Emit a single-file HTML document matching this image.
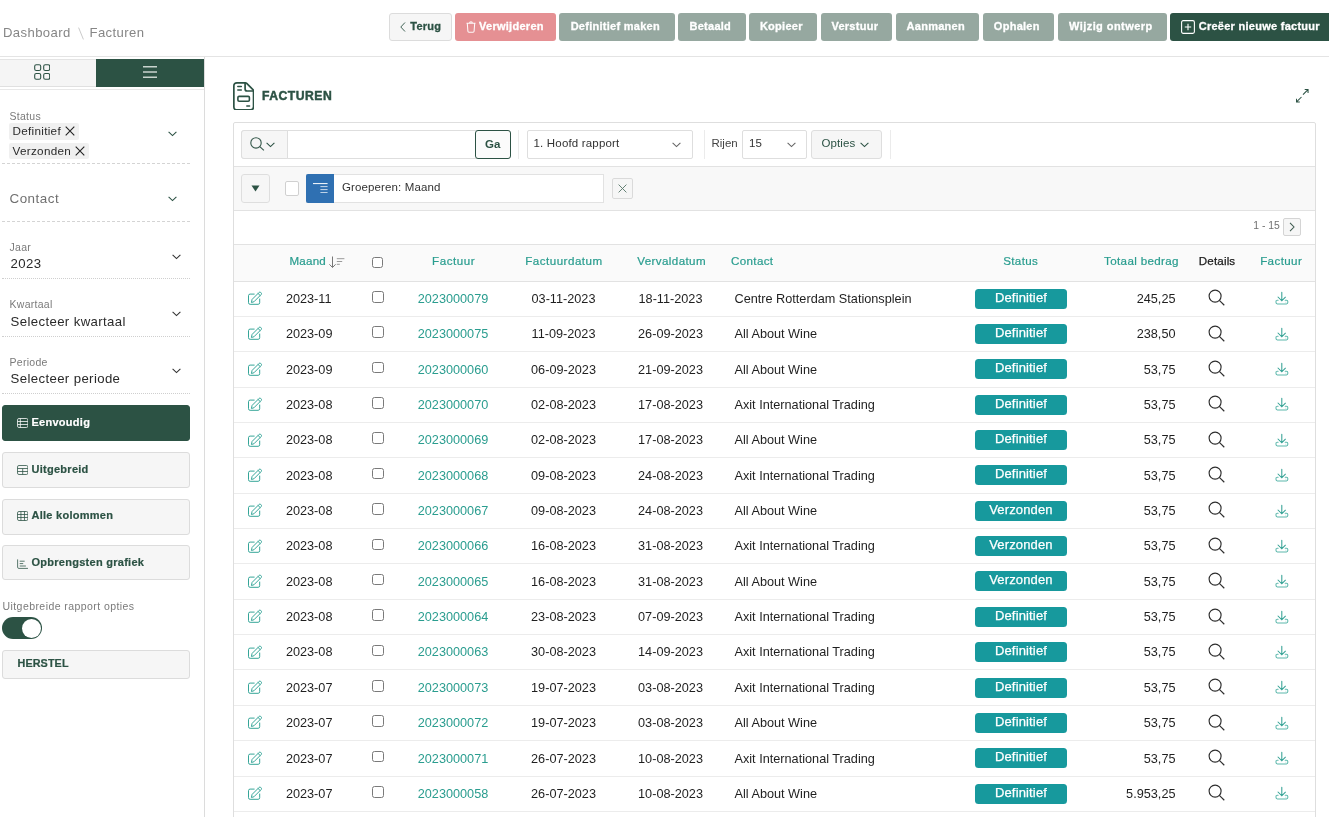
<!DOCTYPE html><html><head><meta charset="utf-8"><title>Facturen</title><style>
*{box-sizing:border-box;margin:0;padding:0}
html,body{width:1329px;height:817px;overflow:hidden;background:#fff}
body{font-family:"Liberation Sans",sans-serif;color:#222;position:relative;-webkit-font-smoothing:antialiased}
#root{position:absolute;left:0;top:0;width:1329px;height:817px;will-change:transform;transform:translateZ(0)}
.abs{position:absolute}
.topbar{position:absolute;left:0;top:0;width:1329px;height:57px;background:#fff;border-bottom:1px solid #e4e4e4}
.crumb{position:absolute;top:25.2px;font-size:13.1px;letter-spacing:0.4px;color:#868686;line-height:16px;white-space:nowrap}
.tb{position:absolute;top:13px;height:28px;border-radius:3px;color:#fff;font-weight:700;font-size:11px;letter-spacing:0.27px;line-height:27px;text-align:center;white-space:nowrap;background:#96a8a0;padding-right:3.4px;-webkit-text-stroke:0.3px currentColor}
.side{position:absolute;left:0;top:57px;width:205px;height:760px;border-right:1px solid #dcdcdc;background:#fff}
.lbl{position:absolute;left:9.5px;font-size:10.5px;letter-spacing:0.28px;color:#7a7a7a;line-height:13px;white-space:nowrap}
.val{position:absolute;left:10.5px;font-size:13.2px;letter-spacing:0.38px;color:#2a2a2a;line-height:16px;white-space:nowrap}
.dash{position:absolute;left:2px;width:188px;height:0;border-top:1px dashed #d4d4d4}
.dot{position:absolute;left:2px;width:188px;height:0;border-top:1px dotted #cfcfcf}
.chip{position:absolute;left:9px;height:16.4px;background:#f0f0f0;border-radius:2px;font-size:11.7px;letter-spacing:0.3px;line-height:16.4px;color:#2a2a2a;padding-left:3.5px;white-space:nowrap}
.sbtn{position:absolute;left:2px;width:188px;height:35px;border:1px solid #dcdcdc;border-radius:3px;background:#f6f6f6;color:#2c5244;font-weight:700;font-size:11px;letter-spacing:0.27px;line-height:33px;padding-left:28.5px;-webkit-text-stroke:0.2px currentColor;white-space:nowrap}
.sbtn.on{background:#2c5244;border-color:#2c5244;color:#fff}
.region{position:absolute;left:233px;top:122px;width:1083px;height:700px;border:1px solid #dedede;border-radius:2px;background:#fff}
.hdr{position:absolute;font-size:11.6px;color:#2a9d8f;line-height:14px;white-space:nowrap;text-align:center;-webkit-text-stroke:0.22px #2a9d8f}
.cell{position:absolute;font-size:12.7px;color:#1f1f1f;line-height:16px;white-space:nowrap}
.lnk{color:#2a9d8f}
.badge{position:absolute;left:975px;width:92px;height:20px;border-radius:3.5px;background:#17999d;color:#fff;font-size:13px;line-height:18.8px;text-align:center;letter-spacing:0.15px;-webkit-text-stroke:0.25px #fff}
.rowline{position:absolute;left:234px;width:1081px;height:1px;background:#ececec}
.cb{position:absolute;width:11.6px;height:11.6px;border:1px solid #7a7a7a;border-radius:2.5px;background:#fff}
</style></head><body><div id="root">
<div class="topbar">
<div class="crumb" style="left:3px">Dashboard</div>
<svg class="abs" style="left:78px;top:27px" width="6" height="13" viewBox="0 0 6 13"><path d="M0.6 0.6 L5.4 12.4" stroke="#c4c4c4" stroke-width="0.9"/></svg>
<div class="crumb" style="left:89.5px">Facturen</div>
<div class="tb" style="left:389px;width:63px;background:#f6f6f6;border:1px solid #dcdcdc;color:#2c5244;line-height:25px;padding-left:14.6px;padding-right:4px"><svg class="abs" style="left:8.6px;top:7px" width="8" height="12" viewBox="0 0 8 12"><path d="M6 1.5 L1.8 6 L6 10.5" fill="none" stroke="#2c5244" stroke-width="0.9"/></svg>Terug</div>
<div class="tb" style="left:455px;width:101px;background:#e59093;padding-left:11.8px;padding-right:0"><svg class="abs" style="left:10.9px;top:8.1px" width="10" height="11.8" viewBox="0 0 10 11.8"><path d="M0.5 2.3 H9.5 M3.6 2.2 Q3.6 0.7 5 0.7 Q6.4 0.7 6.4 2.2 M1.3 2.5 L1.9 10.3 Q2 11.2 2.9 11.2 H7.1 Q8 11.2 8.1 10.3 L8.7 2.5" fill="none" stroke="#fff" stroke-width="1.05" stroke-opacity="0.95"/></svg>Verwijderen</div>
<div class="tb" style="left:559px;width:116px">Definitief maken</div>
<div class="tb" style="left:678px;width:68px">Betaald</div>
<div class="tb" style="left:749px;width:68px">Kopieer</div>
<div class="tb" style="left:821px;width:71px">Verstuur</div>
<div class="tb" style="left:896px;width:83px">Aanmanen</div>
<div class="tb" style="left:983px;width:71px">Ophalen</div>
<div class="tb" style="left:1058px;width:109px"><span style="letter-spacing:0.44px">Wijzig ontwerp</span></div>
<div class="tb" style="left:1170px;width:162px;background:#2c5244;padding-left:16.6px;padding-right:0"><svg class="abs" style="left:11px;top:7px" width="14" height="14" viewBox="0 0 14 14"><rect x="0.6" y="0.6" width="12.8" height="12.8" rx="1.6" fill="none" stroke="#fff" stroke-width="1.1"/><path d="M7 3.8 V10.2 M3.8 7 H10.2" stroke="#fff" stroke-width="1.1"/></svg>Creëer nieuwe factuur</div>
</div>
<div class="side">
<div class="abs" style="left:0;top:1.5px;width:96px;height:28px;background:#f5f5f5;border-top:1px solid #e4e4e4;border-bottom:1px solid #e0e0e0"></div>
<div class="abs" style="left:96px;top:1.5px;width:108px;height:28px;background:#2c5244"></div>
<div class="abs" style="left:0;top:32px;width:204px;height:1px;background:#e8e8e8"></div>
<svg class="abs" style="left:33.7px;top:6.7px" width="16.4" height="16" viewBox="0 0 16.4 16" fill="none" stroke="#2c5244" stroke-width="1.1"><rect x="0.7" y="0.7" width="6" height="5.8" rx="1.6"/><rect x="9.7" y="0.7" width="6" height="5.8" rx="1.6"/><rect x="0.7" y="9.5" width="6" height="5.8" rx="1.6"/><rect x="9.7" y="9.5" width="6" height="5.8" rx="1.6"/></svg>
<svg class="abs" style="left:143px;top:9px" width="14" height="12" viewBox="0 0 14 12" stroke="#c9d4ce" stroke-width="1.5"><path d="M0 0.8 H14 M0 6 H14 M0 11.2 H14"/></svg>
<div class="lbl" style="top:52.599999999999994px">Status</div>
<div class="chip" style="top:66.3px;width:69.5px">Definitief<svg style="position:absolute;right:4px;top:3.2px" width="10" height="10" viewBox="0 0 10 10"><path d="M0.7 0.7 L9.3 9.3 M9.3 0.7 L0.7 9.3" stroke="#222" stroke-width="1.1"/></svg></div>
<div class="chip" style="top:85.80000000000001px;width:79.5px">Verzonden<svg style="position:absolute;right:4px;top:3.2px" width="10" height="10" viewBox="0 0 10 10"><path d="M0.7 0.7 L9.3 9.3 M9.3 0.7 L0.7 9.3" stroke="#222" stroke-width="1.1"/></svg></div>
<svg class="abs" style="left:167.5px;top:73.69999999999999px" width="9" height="6" viewBox="0 0 9 6"><path d="M0.6 0.8 L4.5 4.6 L8.4 0.8" fill="none" stroke="#2c5244" stroke-width="1.1"/></svg>
<div class="dash" style="top:106px"></div>
<div class="val" style="left:9.5px;top:133.5px;color:#707070;font-size:13.4px;letter-spacing:0.5px">Contact</div>
<svg class="abs" style="left:167.5px;top:138.7px" width="9" height="6" viewBox="0 0 9 6"><path d="M0.6 0.8 L4.5 4.6 L8.4 0.8" fill="none" stroke="#2c5244" stroke-width="1.1"/></svg>
<div class="dash" style="top:164px"></div>
<div class="lbl" style="top:184px">Jaar</div>
<div class="val" style="top:198.5px">2023</div>
<svg class="abs" style="left:171.5px;top:196.5px" width="9" height="6" viewBox="0 0 9 6"><path d="M0.6 0.8 L4.5 4.6 L8.4 0.8" fill="none" stroke="#333" stroke-width="1.1"/></svg>
<div class="dot" style="top:221px"></div>
<div class="lbl" style="top:241px">Kwartaal</div>
<div class="val" style="top:256.5px">Selecteer kwartaal</div>
<svg class="abs" style="left:171.5px;top:253.5px" width="9" height="6" viewBox="0 0 9 6"><path d="M0.6 0.8 L4.5 4.6 L8.4 0.8" fill="none" stroke="#333" stroke-width="1.1"/></svg>
<div class="dot" style="top:279px"></div>
<div class="lbl" style="top:299px">Periode</div>
<div class="val" style="top:313.5px">Selecteer periode</div>
<svg class="abs" style="left:171.5px;top:311.1px" width="9" height="6" viewBox="0 0 9 6"><path d="M0.6 0.8 L4.5 4.6 L8.4 0.8" fill="none" stroke="#333" stroke-width="1.1"/></svg>
<div class="dot" style="top:336px"></div>
<div class="sbtn on" style="top:348.00px;height:35.7px;line-height:32.80px"><span class="abs" style="left:13.5px;top:12.20px;line-height:0"><svg width="11.4" height="10" viewBox="0 0 11 10" preserveAspectRatio="none" fill="none" stroke="#fff" stroke-width="0.85" stroke-opacity="0.9"><rect x="0.5" y="0.5" width="10" height="9" rx="1.4"/><path d="M0.5 3.5 H10.5 M0.5 6.5 H10.5 M3.2 0.5 V9.5"/></svg></span>Eenvoudig</div>
<div class="sbtn" style="top:395.20px;height:35.4px;line-height:32.40px"><span class="abs" style="left:13.5px;top:12.00px;line-height:0"><svg width="11.4" height="10" viewBox="0 0 11 10" preserveAspectRatio="none" fill="none" stroke="#2c5244" stroke-width="0.85" stroke-opacity="0.9"><rect x="0.5" y="0.5" width="10" height="9" rx="1.4"/><path d="M0.5 3.5 H10.5 M0.5 6.5 H10.5 M5.5 3.5 V9.5"/></svg></span>Uitgebreid</div>
<div class="sbtn" style="top:442.40px;height:35.7px;line-height:30.40px"><span class="abs" style="left:13.5px;top:11.00px;line-height:0"><svg width="11.4" height="10" viewBox="0 0 11 10" preserveAspectRatio="none" fill="none" stroke="#2c5244" stroke-width="0.85" stroke-opacity="0.9"><rect x="0.5" y="0.5" width="10" height="9" rx="1.4"/><path d="M0.5 3.5 H10.5 M0.5 6.5 H10.5 M3.8 0.5 V9.5 M7.2 0.5 V9.5"/></svg></span>Alle kolommen</div>
<div class="sbtn" style="top:488.40px;height:35px;line-height:33.20px"><span class="abs" style="left:13.5px;top:12.40px;line-height:0"><svg width="11.4" height="10" viewBox="0 0 11 10" preserveAspectRatio="none" fill="none" stroke="#2c5244" stroke-width="0.85" stroke-opacity="0.9"><path d="M0.6 0.4 V8.2 Q0.6 9.4 1.8 9.4 H10.6 M2.6 2.2 H7.4 M2.6 4.6 H6 M2.6 7 H8.6"/></svg></span>Opbrengsten grafiek</div>
<div class="lbl" style="left:2.5px;top:543px;font-size:10.5px;letter-spacing:0.43px">Uitgebreide rapport opties</div>
<div class="abs" style="left:2px;top:560px;width:40px;height:22px;border-radius:11px;background:#2c5244"><div class="abs" style="right:1.5px;top:1.5px;width:19px;height:19px;border-radius:50%;background:#fff"></div></div>
<div class="sbtn" style="top:593px;height:28.5px;line-height:25.5px;padding-left:14.5px;font-size:10.8px;letter-spacing:0.1px">HERSTEL</div>
</div>
<svg class="abs" style="left:232.7px;top:81.7px" width="21.4" height="28.7" viewBox="0 0 21.4 28.7" fill="none" stroke="#2c5244" stroke-width="1.7" stroke-linecap="round" stroke-linejoin="round"><path d="M0.85 4 Q0.85 0.85 4 0.85 H12.3 Q13.1 0.85 13.7 1.45 L19.95 7.7 Q20.55 8.3 20.55 9.1 V24.7 Q20.55 27.85 17.4 27.85 H4 Q0.85 27.85 0.85 24.7 Z"/><path d="M12.1 1.2 V7 Q12.1 9 14.1 9 H20.2"/><path d="M4.8 4.5 H8.3 M4.8 8.1 H8.3" stroke-width="1.5"/><rect x="4.9" y="14.4" width="11.5" height="4.9" rx="1.2" stroke-width="1.6"/><path d="M13.8 24.1 H16.6" stroke-width="1.5"/></svg>
<div class="abs" style="left:262px;top:88.1px;font-size:12.2px;font-weight:700;color:#2c5244;line-height:16px;letter-spacing:0.48px;-webkit-text-stroke:0.45px #2c5244">FACTUREN</div>
<svg class="abs" style="left:1296.1px;top:89px" width="12.6" height="13.6" viewBox="0 0 12.6 13.6" fill="none" stroke="#2c5244" stroke-width="1.05"><path d="M7 5.6 L12 0.6 M8.7 0.55 H12.05 V3.9 M5.5 8 L0.5 13 M0.45 9.7 V13.05 H3.8"/></svg>
<div class="region"></div>
<div class="abs" style="left:241px;top:130px;width:270px;height:28.5px;border:1px solid #dedede;border-radius:3px;background:#fff"></div>
<div class="abs" style="left:241px;top:130px;width:47px;height:28.5px;border:1px solid #dedede;border-radius:3px 0 0 3px;background:#f6f6f6"></div>
<svg class="abs" style="left:250.2px;top:137.2px" width="15" height="14" viewBox="0 0 15 14" fill="none" stroke="#34574a" stroke-width="1.1"><circle cx="6" cy="5.9" r="5.2"/><path d="M9.8 9.7 L13.9 13.4"/></svg>
<svg class="abs" style="left:266.0px;top:142.0px" width="9" height="6" viewBox="0 0 9 6"><path d="M0.6 0.8 L4.5 4.6 L8.4 0.8" fill="none" stroke="#2c5244" stroke-width="1.1"/></svg>
<div class="abs" style="left:474.5px;top:130px;width:36.5px;height:28.5px;border:1px solid #2c5244;border-radius:3px;background:#fbfbfb;color:#2c5244;font-weight:700;font-size:11.5px;line-height:26px;text-align:center">Ga</div>
<div class="abs" style="left:518px;top:130px;width:1px;height:28.5px;background:#ebebeb"></div>
<div class="abs" style="left:527px;top:130px;width:165.5px;height:28.5px;border:1px solid #dedede;border-radius:2px;background:#fff;font-size:11.5px;line-height:24.6px;padding-left:5.5px;color:#333;letter-spacing:0.18px">1. Hoofd rapport</div>
<svg class="abs" style="left:672.0px;top:142.0px" width="9" height="6" viewBox="0 0 9 6"><path d="M0.6 0.8 L4.5 4.6 L8.4 0.8" fill="none" stroke="#666" stroke-width="1.1"/></svg>
<div class="abs" style="left:704px;top:130px;width:1px;height:28.5px;background:#ebebeb"></div>
<div class="abs" style="left:711.5px;top:130px;font-size:11.5px;line-height:27px;color:#444">Rijen</div>
<div class="abs" style="left:742px;top:130px;width:64.5px;height:28.5px;border:1px solid #dedede;border-radius:2px;background:#fff;font-size:11.5px;line-height:24.4px;padding-left:6px;color:#333">15</div>
<svg class="abs" style="left:786.5px;top:142.0px" width="9" height="6" viewBox="0 0 9 6"><path d="M0.6 0.8 L4.5 4.6 L8.4 0.8" fill="none" stroke="#666" stroke-width="1.1"/></svg>
<div class="abs" style="left:811px;top:130px;width:70.5px;height:28.5px;border:1px solid #dedede;border-radius:3px;background:#f6f6f6;font-size:11.5px;line-height:24.4px;padding-left:9.5px;letter-spacing:0.1px;color:#2c5244">Opties</div>
<svg class="abs" style="left:859.5px;top:141.8px" width="9" height="6" viewBox="0 0 9 6"><path d="M0.6 0.8 L4.5 4.6 L8.4 0.8" fill="none" stroke="#2c5244" stroke-width="1.1"/></svg>
<div class="abs" style="left:889.5px;top:130px;width:1px;height:28.5px;background:#ebebeb"></div>
<div class="abs" style="left:234px;top:166px;width:1081px;height:44.5px;background:#f8f8f8;border-top:1px solid #e2e2e2;border-bottom:1px solid #e2e2e2"></div>
<div class="abs" style="left:241px;top:174px;width:28.5px;height:28.6px;border:1px solid #dedede;border-radius:3px;background:#f6f6f6"></div>
<svg class="abs" style="left:251px;top:185px" width="9" height="7" viewBox="0 0 9 7"><path d="M0.5 0.5 H8.5 L4.5 6.5 Z" fill="#2c5244"/></svg>
<div class="abs" style="left:284.5px;top:181px;width:14.5px;height:14.5px;border:1px solid #d0d0d0;border-radius:2px;background:#fff"></div>
<div class="abs" style="left:306px;top:174px;width:297.5px;height:28.6px;border:1px solid #e2e2e2;background:#fff;font-size:11.5px;line-height:24.4px;padding-left:35px;color:#333;letter-spacing:0.12px">Groeperen: Maand</div>
<div class="abs" style="left:306px;top:174px;width:28px;height:28.6px;background:#2f70b2;border-radius:2px 0 0 2px"></div>
<svg class="abs" style="left:313.2px;top:182.7px" width="14.6" height="10.4" viewBox="0 0 14.6 10.4" stroke="#fff" stroke-width="1"><path d="M0 0.6 H14.6"/><path d="M7.4 3.6 H14.6 M7.4 6.6 H14.6 M7.4 9.6 H14.6" stroke-opacity="0.75"/></svg>
<div class="abs" style="left:612px;top:178px;width:20.6px;height:20.6px;border:1px solid #dadada;border-radius:2px;background:#f6f6f6"></div>
<svg class="abs" style="left:618px;top:184px" width="9" height="9" viewBox="0 0 9 9"><path d="M0.6 0.6 L8.4 8.4 M8.4 0.6 L0.6 8.4" stroke="#5d7b6f" stroke-width="0.95"/></svg>
<div class="abs" style="left:1253.3px;top:218.7px;font-size:10.4px;line-height:14px;color:#707070">1 - 15</div>
<div class="abs" style="left:1283px;top:218px;width:18px;height:17.5px;border:1px solid #d4d4d4;border-radius:2px;background:#f6f6f6"></div>
<svg class="abs" style="left:1289px;top:222px" width="6" height="10" viewBox="0 0 6 10"><path d="M1 0.8 L5 5 L1 9.2" fill="none" stroke="#3d5a4f" stroke-width="1.05"/></svg>
<div class="abs" style="left:234px;top:244px;width:1081px;height:37.5px;background:#fafafa;border-top:1px solid #e2e2e2;border-bottom:1px solid #e2e2e2"></div>
<div class="hdr" style="left:289.5px;top:254.3px;letter-spacing:0.2px">Maand</div>
<svg class="abs" style="left:329px;top:256px" width="16" height="12" viewBox="0 0 16 12" fill="none" stroke="#777" stroke-width="1"><path d="M3.5 0.5 V11.3 M0.4 8.3 L3.5 11.5 L6.6 8.3"/><path d="M7.8 2.7 H15.4 M7.8 5.5 H13.2 M7.8 8.3 H10.8" stroke="#9a9a9a"/></svg>
<div class="cb" style="left:372px;top:256.9px;width:11px;height:11px"></div>
<div class="hdr" style="left:393.67499999999995px;width:120px;top:254.3px;letter-spacing:0.55px;">Factuur</div>
<div class="hdr" style="left:503.95000000000005px;width:120px;top:254.3px;letter-spacing:0.5px;">Factuurdatum</div>
<div class="hdr" style="left:611.6px;width:120px;top:254.3px;letter-spacing:0.4px;">Vervaldatum</div>
<div class="hdr" style="left:731px;top:254.3px;letter-spacing:0.35px">Contact</div>
<div class="hdr" style="left:960.675px;width:120px;top:254.3px;letter-spacing:0.35px;">Status</div>
<div class="hdr" style="left:1058.9px;width:120px;text-align:right;top:254.3px;letter-spacing:0.35px">Totaal bedrag</div>
<div class="hdr" style="left:1157.075px;width:120px;top:254.3px;letter-spacing:0.15px;color:#1a1a1a;-webkit-text-stroke:0.25px #1a1a1a">Details</div>
<div class="hdr" style="left:1221.2px;width:120px;top:254.3px;letter-spacing:0.4px;">Factuur</div>
<svg class="abs" style="left:247.7px;top:291.1px" width="14.5" height="14" viewBox="0 0 14.5 14" fill="none" stroke="#35a598" stroke-width="1" stroke-linejoin="round" stroke-linecap="round"><path d="M6.2 3.1 H2.1 Q0.5 3.1 0.5 4.7 V11.7 Q0.5 13.3 2.1 13.3 H10.1 Q11.7 13.3 11.7 11.7 V8"/><path d="M3.5 11.1 L4.1 8.4 L11.1 1.4 Q11.9 0.6 12.7 1.4 L13.2 1.9 Q14 2.7 13.2 3.5 L6.2 10.5 Z"/><path d="M10.1 2.5 L12.1 4.5"/></svg>
<div class="cell" style="left:285.9px;top:290.85px">2023-11</div>
<div class="cb" style="left:372px;top:291.00px"></div>
<div class="cell lnk" style="left:393px;width:120px;text-align:center;top:290.85px">2023000079</div>
<div class="cell" style="left:503.5px;width:120px;text-align:center;top:290.85px">03-11-2023</div>
<div class="cell" style="left:610.5px;width:120px;text-align:center;top:290.85px">18-11-2023</div>
<div class="cell" style="left:734.5px;top:290.85px">Centre Rotterdam Stationsplein</div>
<div class="badge" style="top:288.60px">Definitief</div>
<div class="cell" style="left:1055.5px;width:120px;text-align:right;top:290.85px">245,25</div>
<svg class="abs" style="left:1208.4px;top:289.3px" width="17" height="17" viewBox="0 0 17 17" fill="none" stroke="#2e2e2e" stroke-width="1.15"><circle cx="7.1" cy="7.05" r="6"/><path d="M11.35 11.3 L16.3 16.25"/></svg>
<svg class="abs" style="left:1274.6px;top:291.4px" width="14" height="14" viewBox="0 0 14 14" fill="none" stroke="#33a194" stroke-width="1.05" stroke-linecap="round"><path d="M6.8 1.2 V9.6 M3 6 L6.8 9.8 L10.4 6.2"/><path d="M3.1 9.2 H2.2 Q1 9.2 1 10.4 V11.6 Q1 12.9 2.3 12.9 H11.5 Q12.8 12.9 12.8 11.6 V10.4 Q12.8 9.2 11.6 9.2 H10.2" stroke="#5db8ac"/><circle cx="10.9" cy="11.1" r="0.45" fill="#5db8ac" stroke="none"/></svg>
<div class="rowline" style="top:315.86px"></div>
<svg class="abs" style="left:247.7px;top:326.46px" width="14.5" height="14" viewBox="0 0 14.5 14" fill="none" stroke="#35a598" stroke-width="1" stroke-linejoin="round" stroke-linecap="round"><path d="M6.2 3.1 H2.1 Q0.5 3.1 0.5 4.7 V11.7 Q0.5 13.3 2.1 13.3 H10.1 Q11.7 13.3 11.7 11.7 V8"/><path d="M3.5 11.1 L4.1 8.4 L11.1 1.4 Q11.9 0.6 12.7 1.4 L13.2 1.9 Q14 2.7 13.2 3.5 L6.2 10.5 Z"/><path d="M10.1 2.5 L12.1 4.5"/></svg>
<div class="cell" style="left:285.9px;top:326.21px">2023-09</div>
<div class="cb" style="left:372px;top:326.36px"></div>
<div class="cell lnk" style="left:393px;width:120px;text-align:center;top:326.21px">2023000075</div>
<div class="cell" style="left:503.5px;width:120px;text-align:center;top:326.21px">11-09-2023</div>
<div class="cell" style="left:610.5px;width:120px;text-align:center;top:326.21px">26-09-2023</div>
<div class="cell" style="left:734.5px;top:326.21px">All About Wine</div>
<div class="badge" style="top:323.96px">Definitief</div>
<div class="cell" style="left:1055.5px;width:120px;text-align:right;top:326.21px">238,50</div>
<svg class="abs" style="left:1208.4px;top:324.66px" width="17" height="17" viewBox="0 0 17 17" fill="none" stroke="#2e2e2e" stroke-width="1.15"><circle cx="7.1" cy="7.05" r="6"/><path d="M11.35 11.3 L16.3 16.25"/></svg>
<svg class="abs" style="left:1274.6px;top:326.76px" width="14" height="14" viewBox="0 0 14 14" fill="none" stroke="#33a194" stroke-width="1.05" stroke-linecap="round"><path d="M6.8 1.2 V9.6 M3 6 L6.8 9.8 L10.4 6.2"/><path d="M3.1 9.2 H2.2 Q1 9.2 1 10.4 V11.6 Q1 12.9 2.3 12.9 H11.5 Q12.8 12.9 12.8 11.6 V10.4 Q12.8 9.2 11.6 9.2 H10.2" stroke="#5db8ac"/><circle cx="10.9" cy="11.1" r="0.45" fill="#5db8ac" stroke="none"/></svg>
<div class="rowline" style="top:351.22px"></div>
<svg class="abs" style="left:247.7px;top:361.82px" width="14.5" height="14" viewBox="0 0 14.5 14" fill="none" stroke="#35a598" stroke-width="1" stroke-linejoin="round" stroke-linecap="round"><path d="M6.2 3.1 H2.1 Q0.5 3.1 0.5 4.7 V11.7 Q0.5 13.3 2.1 13.3 H10.1 Q11.7 13.3 11.7 11.7 V8"/><path d="M3.5 11.1 L4.1 8.4 L11.1 1.4 Q11.9 0.6 12.7 1.4 L13.2 1.9 Q14 2.7 13.2 3.5 L6.2 10.5 Z"/><path d="M10.1 2.5 L12.1 4.5"/></svg>
<div class="cell" style="left:285.9px;top:361.57px">2023-09</div>
<div class="cb" style="left:372px;top:361.72px"></div>
<div class="cell lnk" style="left:393px;width:120px;text-align:center;top:361.57px">2023000060</div>
<div class="cell" style="left:503.5px;width:120px;text-align:center;top:361.57px">06-09-2023</div>
<div class="cell" style="left:610.5px;width:120px;text-align:center;top:361.57px">21-09-2023</div>
<div class="cell" style="left:734.5px;top:361.57px">All About Wine</div>
<div class="badge" style="top:359.32px">Definitief</div>
<div class="cell" style="left:1055.5px;width:120px;text-align:right;top:361.57px">53,75</div>
<svg class="abs" style="left:1208.4px;top:360.02px" width="17" height="17" viewBox="0 0 17 17" fill="none" stroke="#2e2e2e" stroke-width="1.15"><circle cx="7.1" cy="7.05" r="6"/><path d="M11.35 11.3 L16.3 16.25"/></svg>
<svg class="abs" style="left:1274.6px;top:362.12px" width="14" height="14" viewBox="0 0 14 14" fill="none" stroke="#33a194" stroke-width="1.05" stroke-linecap="round"><path d="M6.8 1.2 V9.6 M3 6 L6.8 9.8 L10.4 6.2"/><path d="M3.1 9.2 H2.2 Q1 9.2 1 10.4 V11.6 Q1 12.9 2.3 12.9 H11.5 Q12.8 12.9 12.8 11.6 V10.4 Q12.8 9.2 11.6 9.2 H10.2" stroke="#5db8ac"/><circle cx="10.9" cy="11.1" r="0.45" fill="#5db8ac" stroke="none"/></svg>
<div class="rowline" style="top:386.58px"></div>
<svg class="abs" style="left:247.7px;top:397.18px" width="14.5" height="14" viewBox="0 0 14.5 14" fill="none" stroke="#35a598" stroke-width="1" stroke-linejoin="round" stroke-linecap="round"><path d="M6.2 3.1 H2.1 Q0.5 3.1 0.5 4.7 V11.7 Q0.5 13.3 2.1 13.3 H10.1 Q11.7 13.3 11.7 11.7 V8"/><path d="M3.5 11.1 L4.1 8.4 L11.1 1.4 Q11.9 0.6 12.7 1.4 L13.2 1.9 Q14 2.7 13.2 3.5 L6.2 10.5 Z"/><path d="M10.1 2.5 L12.1 4.5"/></svg>
<div class="cell" style="left:285.9px;top:396.93px">2023-08</div>
<div class="cb" style="left:372px;top:397.08px"></div>
<div class="cell lnk" style="left:393px;width:120px;text-align:center;top:396.93px">2023000070</div>
<div class="cell" style="left:503.5px;width:120px;text-align:center;top:396.93px">02-08-2023</div>
<div class="cell" style="left:610.5px;width:120px;text-align:center;top:396.93px">17-08-2023</div>
<div class="cell" style="left:734.5px;top:396.93px">Axit International Trading</div>
<div class="badge" style="top:394.68px">Definitief</div>
<div class="cell" style="left:1055.5px;width:120px;text-align:right;top:396.93px">53,75</div>
<svg class="abs" style="left:1208.4px;top:395.38px" width="17" height="17" viewBox="0 0 17 17" fill="none" stroke="#2e2e2e" stroke-width="1.15"><circle cx="7.1" cy="7.05" r="6"/><path d="M11.35 11.3 L16.3 16.25"/></svg>
<svg class="abs" style="left:1274.6px;top:397.48px" width="14" height="14" viewBox="0 0 14 14" fill="none" stroke="#33a194" stroke-width="1.05" stroke-linecap="round"><path d="M6.8 1.2 V9.6 M3 6 L6.8 9.8 L10.4 6.2"/><path d="M3.1 9.2 H2.2 Q1 9.2 1 10.4 V11.6 Q1 12.9 2.3 12.9 H11.5 Q12.8 12.9 12.8 11.6 V10.4 Q12.8 9.2 11.6 9.2 H10.2" stroke="#5db8ac"/><circle cx="10.9" cy="11.1" r="0.45" fill="#5db8ac" stroke="none"/></svg>
<div class="rowline" style="top:421.94px"></div>
<svg class="abs" style="left:247.7px;top:432.54px" width="14.5" height="14" viewBox="0 0 14.5 14" fill="none" stroke="#35a598" stroke-width="1" stroke-linejoin="round" stroke-linecap="round"><path d="M6.2 3.1 H2.1 Q0.5 3.1 0.5 4.7 V11.7 Q0.5 13.3 2.1 13.3 H10.1 Q11.7 13.3 11.7 11.7 V8"/><path d="M3.5 11.1 L4.1 8.4 L11.1 1.4 Q11.9 0.6 12.7 1.4 L13.2 1.9 Q14 2.7 13.2 3.5 L6.2 10.5 Z"/><path d="M10.1 2.5 L12.1 4.5"/></svg>
<div class="cell" style="left:285.9px;top:432.29px">2023-08</div>
<div class="cb" style="left:372px;top:432.44px"></div>
<div class="cell lnk" style="left:393px;width:120px;text-align:center;top:432.29px">2023000069</div>
<div class="cell" style="left:503.5px;width:120px;text-align:center;top:432.29px">02-08-2023</div>
<div class="cell" style="left:610.5px;width:120px;text-align:center;top:432.29px">17-08-2023</div>
<div class="cell" style="left:734.5px;top:432.29px">All About Wine</div>
<div class="badge" style="top:430.04px">Definitief</div>
<div class="cell" style="left:1055.5px;width:120px;text-align:right;top:432.29px">53,75</div>
<svg class="abs" style="left:1208.4px;top:430.74px" width="17" height="17" viewBox="0 0 17 17" fill="none" stroke="#2e2e2e" stroke-width="1.15"><circle cx="7.1" cy="7.05" r="6"/><path d="M11.35 11.3 L16.3 16.25"/></svg>
<svg class="abs" style="left:1274.6px;top:432.84px" width="14" height="14" viewBox="0 0 14 14" fill="none" stroke="#33a194" stroke-width="1.05" stroke-linecap="round"><path d="M6.8 1.2 V9.6 M3 6 L6.8 9.8 L10.4 6.2"/><path d="M3.1 9.2 H2.2 Q1 9.2 1 10.4 V11.6 Q1 12.9 2.3 12.9 H11.5 Q12.8 12.9 12.8 11.6 V10.4 Q12.8 9.2 11.6 9.2 H10.2" stroke="#5db8ac"/><circle cx="10.9" cy="11.1" r="0.45" fill="#5db8ac" stroke="none"/></svg>
<div class="rowline" style="top:457.30px"></div>
<svg class="abs" style="left:247.7px;top:467.9px" width="14.5" height="14" viewBox="0 0 14.5 14" fill="none" stroke="#35a598" stroke-width="1" stroke-linejoin="round" stroke-linecap="round"><path d="M6.2 3.1 H2.1 Q0.5 3.1 0.5 4.7 V11.7 Q0.5 13.3 2.1 13.3 H10.1 Q11.7 13.3 11.7 11.7 V8"/><path d="M3.5 11.1 L4.1 8.4 L11.1 1.4 Q11.9 0.6 12.7 1.4 L13.2 1.9 Q14 2.7 13.2 3.5 L6.2 10.5 Z"/><path d="M10.1 2.5 L12.1 4.5"/></svg>
<div class="cell" style="left:285.9px;top:467.65px">2023-08</div>
<div class="cb" style="left:372px;top:467.80px"></div>
<div class="cell lnk" style="left:393px;width:120px;text-align:center;top:467.65px">2023000068</div>
<div class="cell" style="left:503.5px;width:120px;text-align:center;top:467.65px">09-08-2023</div>
<div class="cell" style="left:610.5px;width:120px;text-align:center;top:467.65px">24-08-2023</div>
<div class="cell" style="left:734.5px;top:467.65px">Axit International Trading</div>
<div class="badge" style="top:465.40px">Definitief</div>
<div class="cell" style="left:1055.5px;width:120px;text-align:right;top:467.65px">53,75</div>
<svg class="abs" style="left:1208.4px;top:466.1px" width="17" height="17" viewBox="0 0 17 17" fill="none" stroke="#2e2e2e" stroke-width="1.15"><circle cx="7.1" cy="7.05" r="6"/><path d="M11.35 11.3 L16.3 16.25"/></svg>
<svg class="abs" style="left:1274.6px;top:468.2px" width="14" height="14" viewBox="0 0 14 14" fill="none" stroke="#33a194" stroke-width="1.05" stroke-linecap="round"><path d="M6.8 1.2 V9.6 M3 6 L6.8 9.8 L10.4 6.2"/><path d="M3.1 9.2 H2.2 Q1 9.2 1 10.4 V11.6 Q1 12.9 2.3 12.9 H11.5 Q12.8 12.9 12.8 11.6 V10.4 Q12.8 9.2 11.6 9.2 H10.2" stroke="#5db8ac"/><circle cx="10.9" cy="11.1" r="0.45" fill="#5db8ac" stroke="none"/></svg>
<div class="rowline" style="top:492.66px"></div>
<svg class="abs" style="left:247.7px;top:503.26px" width="14.5" height="14" viewBox="0 0 14.5 14" fill="none" stroke="#35a598" stroke-width="1" stroke-linejoin="round" stroke-linecap="round"><path d="M6.2 3.1 H2.1 Q0.5 3.1 0.5 4.7 V11.7 Q0.5 13.3 2.1 13.3 H10.1 Q11.7 13.3 11.7 11.7 V8"/><path d="M3.5 11.1 L4.1 8.4 L11.1 1.4 Q11.9 0.6 12.7 1.4 L13.2 1.9 Q14 2.7 13.2 3.5 L6.2 10.5 Z"/><path d="M10.1 2.5 L12.1 4.5"/></svg>
<div class="cell" style="left:285.9px;top:503.01px">2023-08</div>
<div class="cb" style="left:372px;top:503.16px"></div>
<div class="cell lnk" style="left:393px;width:120px;text-align:center;top:503.01px">2023000067</div>
<div class="cell" style="left:503.5px;width:120px;text-align:center;top:503.01px">09-08-2023</div>
<div class="cell" style="left:610.5px;width:120px;text-align:center;top:503.01px">24-08-2023</div>
<div class="cell" style="left:734.5px;top:503.01px">All About Wine</div>
<div class="badge" style="top:500.76px">Verzonden</div>
<div class="cell" style="left:1055.5px;width:120px;text-align:right;top:503.01px">53,75</div>
<svg class="abs" style="left:1208.4px;top:501.46px" width="17" height="17" viewBox="0 0 17 17" fill="none" stroke="#2e2e2e" stroke-width="1.15"><circle cx="7.1" cy="7.05" r="6"/><path d="M11.35 11.3 L16.3 16.25"/></svg>
<svg class="abs" style="left:1274.6px;top:503.56px" width="14" height="14" viewBox="0 0 14 14" fill="none" stroke="#33a194" stroke-width="1.05" stroke-linecap="round"><path d="M6.8 1.2 V9.6 M3 6 L6.8 9.8 L10.4 6.2"/><path d="M3.1 9.2 H2.2 Q1 9.2 1 10.4 V11.6 Q1 12.9 2.3 12.9 H11.5 Q12.8 12.9 12.8 11.6 V10.4 Q12.8 9.2 11.6 9.2 H10.2" stroke="#5db8ac"/><circle cx="10.9" cy="11.1" r="0.45" fill="#5db8ac" stroke="none"/></svg>
<div class="rowline" style="top:528.02px"></div>
<svg class="abs" style="left:247.7px;top:538.62px" width="14.5" height="14" viewBox="0 0 14.5 14" fill="none" stroke="#35a598" stroke-width="1" stroke-linejoin="round" stroke-linecap="round"><path d="M6.2 3.1 H2.1 Q0.5 3.1 0.5 4.7 V11.7 Q0.5 13.3 2.1 13.3 H10.1 Q11.7 13.3 11.7 11.7 V8"/><path d="M3.5 11.1 L4.1 8.4 L11.1 1.4 Q11.9 0.6 12.7 1.4 L13.2 1.9 Q14 2.7 13.2 3.5 L6.2 10.5 Z"/><path d="M10.1 2.5 L12.1 4.5"/></svg>
<div class="cell" style="left:285.9px;top:538.37px">2023-08</div>
<div class="cb" style="left:372px;top:538.52px"></div>
<div class="cell lnk" style="left:393px;width:120px;text-align:center;top:538.37px">2023000066</div>
<div class="cell" style="left:503.5px;width:120px;text-align:center;top:538.37px">16-08-2023</div>
<div class="cell" style="left:610.5px;width:120px;text-align:center;top:538.37px">31-08-2023</div>
<div class="cell" style="left:734.5px;top:538.37px">Axit International Trading</div>
<div class="badge" style="top:536.12px">Verzonden</div>
<div class="cell" style="left:1055.5px;width:120px;text-align:right;top:538.37px">53,75</div>
<svg class="abs" style="left:1208.4px;top:536.82px" width="17" height="17" viewBox="0 0 17 17" fill="none" stroke="#2e2e2e" stroke-width="1.15"><circle cx="7.1" cy="7.05" r="6"/><path d="M11.35 11.3 L16.3 16.25"/></svg>
<svg class="abs" style="left:1274.6px;top:538.92px" width="14" height="14" viewBox="0 0 14 14" fill="none" stroke="#33a194" stroke-width="1.05" stroke-linecap="round"><path d="M6.8 1.2 V9.6 M3 6 L6.8 9.8 L10.4 6.2"/><path d="M3.1 9.2 H2.2 Q1 9.2 1 10.4 V11.6 Q1 12.9 2.3 12.9 H11.5 Q12.8 12.9 12.8 11.6 V10.4 Q12.8 9.2 11.6 9.2 H10.2" stroke="#5db8ac"/><circle cx="10.9" cy="11.1" r="0.45" fill="#5db8ac" stroke="none"/></svg>
<div class="rowline" style="top:563.38px"></div>
<svg class="abs" style="left:247.7px;top:573.98px" width="14.5" height="14" viewBox="0 0 14.5 14" fill="none" stroke="#35a598" stroke-width="1" stroke-linejoin="round" stroke-linecap="round"><path d="M6.2 3.1 H2.1 Q0.5 3.1 0.5 4.7 V11.7 Q0.5 13.3 2.1 13.3 H10.1 Q11.7 13.3 11.7 11.7 V8"/><path d="M3.5 11.1 L4.1 8.4 L11.1 1.4 Q11.9 0.6 12.7 1.4 L13.2 1.9 Q14 2.7 13.2 3.5 L6.2 10.5 Z"/><path d="M10.1 2.5 L12.1 4.5"/></svg>
<div class="cell" style="left:285.9px;top:573.73px">2023-08</div>
<div class="cb" style="left:372px;top:573.88px"></div>
<div class="cell lnk" style="left:393px;width:120px;text-align:center;top:573.73px">2023000065</div>
<div class="cell" style="left:503.5px;width:120px;text-align:center;top:573.73px">16-08-2023</div>
<div class="cell" style="left:610.5px;width:120px;text-align:center;top:573.73px">31-08-2023</div>
<div class="cell" style="left:734.5px;top:573.73px">All About Wine</div>
<div class="badge" style="top:571.48px">Verzonden</div>
<div class="cell" style="left:1055.5px;width:120px;text-align:right;top:573.73px">53,75</div>
<svg class="abs" style="left:1208.4px;top:572.18px" width="17" height="17" viewBox="0 0 17 17" fill="none" stroke="#2e2e2e" stroke-width="1.15"><circle cx="7.1" cy="7.05" r="6"/><path d="M11.35 11.3 L16.3 16.25"/></svg>
<svg class="abs" style="left:1274.6px;top:574.28px" width="14" height="14" viewBox="0 0 14 14" fill="none" stroke="#33a194" stroke-width="1.05" stroke-linecap="round"><path d="M6.8 1.2 V9.6 M3 6 L6.8 9.8 L10.4 6.2"/><path d="M3.1 9.2 H2.2 Q1 9.2 1 10.4 V11.6 Q1 12.9 2.3 12.9 H11.5 Q12.8 12.9 12.8 11.6 V10.4 Q12.8 9.2 11.6 9.2 H10.2" stroke="#5db8ac"/><circle cx="10.9" cy="11.1" r="0.45" fill="#5db8ac" stroke="none"/></svg>
<div class="rowline" style="top:598.74px"></div>
<svg class="abs" style="left:247.7px;top:609.34px" width="14.5" height="14" viewBox="0 0 14.5 14" fill="none" stroke="#35a598" stroke-width="1" stroke-linejoin="round" stroke-linecap="round"><path d="M6.2 3.1 H2.1 Q0.5 3.1 0.5 4.7 V11.7 Q0.5 13.3 2.1 13.3 H10.1 Q11.7 13.3 11.7 11.7 V8"/><path d="M3.5 11.1 L4.1 8.4 L11.1 1.4 Q11.9 0.6 12.7 1.4 L13.2 1.9 Q14 2.7 13.2 3.5 L6.2 10.5 Z"/><path d="M10.1 2.5 L12.1 4.5"/></svg>
<div class="cell" style="left:285.9px;top:609.09px">2023-08</div>
<div class="cb" style="left:372px;top:609.24px"></div>
<div class="cell lnk" style="left:393px;width:120px;text-align:center;top:609.09px">2023000064</div>
<div class="cell" style="left:503.5px;width:120px;text-align:center;top:609.09px">23-08-2023</div>
<div class="cell" style="left:610.5px;width:120px;text-align:center;top:609.09px">07-09-2023</div>
<div class="cell" style="left:734.5px;top:609.09px">Axit International Trading</div>
<div class="badge" style="top:606.84px">Definitief</div>
<div class="cell" style="left:1055.5px;width:120px;text-align:right;top:609.09px">53,75</div>
<svg class="abs" style="left:1208.4px;top:607.54px" width="17" height="17" viewBox="0 0 17 17" fill="none" stroke="#2e2e2e" stroke-width="1.15"><circle cx="7.1" cy="7.05" r="6"/><path d="M11.35 11.3 L16.3 16.25"/></svg>
<svg class="abs" style="left:1274.6px;top:609.64px" width="14" height="14" viewBox="0 0 14 14" fill="none" stroke="#33a194" stroke-width="1.05" stroke-linecap="round"><path d="M6.8 1.2 V9.6 M3 6 L6.8 9.8 L10.4 6.2"/><path d="M3.1 9.2 H2.2 Q1 9.2 1 10.4 V11.6 Q1 12.9 2.3 12.9 H11.5 Q12.8 12.9 12.8 11.6 V10.4 Q12.8 9.2 11.6 9.2 H10.2" stroke="#5db8ac"/><circle cx="10.9" cy="11.1" r="0.45" fill="#5db8ac" stroke="none"/></svg>
<div class="rowline" style="top:634.10px"></div>
<svg class="abs" style="left:247.7px;top:644.7px" width="14.5" height="14" viewBox="0 0 14.5 14" fill="none" stroke="#35a598" stroke-width="1" stroke-linejoin="round" stroke-linecap="round"><path d="M6.2 3.1 H2.1 Q0.5 3.1 0.5 4.7 V11.7 Q0.5 13.3 2.1 13.3 H10.1 Q11.7 13.3 11.7 11.7 V8"/><path d="M3.5 11.1 L4.1 8.4 L11.1 1.4 Q11.9 0.6 12.7 1.4 L13.2 1.9 Q14 2.7 13.2 3.5 L6.2 10.5 Z"/><path d="M10.1 2.5 L12.1 4.5"/></svg>
<div class="cell" style="left:285.9px;top:644.45px">2023-08</div>
<div class="cb" style="left:372px;top:644.60px"></div>
<div class="cell lnk" style="left:393px;width:120px;text-align:center;top:644.45px">2023000063</div>
<div class="cell" style="left:503.5px;width:120px;text-align:center;top:644.45px">30-08-2023</div>
<div class="cell" style="left:610.5px;width:120px;text-align:center;top:644.45px">14-09-2023</div>
<div class="cell" style="left:734.5px;top:644.45px">Axit International Trading</div>
<div class="badge" style="top:642.20px">Definitief</div>
<div class="cell" style="left:1055.5px;width:120px;text-align:right;top:644.45px">53,75</div>
<svg class="abs" style="left:1208.4px;top:642.9px" width="17" height="17" viewBox="0 0 17 17" fill="none" stroke="#2e2e2e" stroke-width="1.15"><circle cx="7.1" cy="7.05" r="6"/><path d="M11.35 11.3 L16.3 16.25"/></svg>
<svg class="abs" style="left:1274.6px;top:645.0px" width="14" height="14" viewBox="0 0 14 14" fill="none" stroke="#33a194" stroke-width="1.05" stroke-linecap="round"><path d="M6.8 1.2 V9.6 M3 6 L6.8 9.8 L10.4 6.2"/><path d="M3.1 9.2 H2.2 Q1 9.2 1 10.4 V11.6 Q1 12.9 2.3 12.9 H11.5 Q12.8 12.9 12.8 11.6 V10.4 Q12.8 9.2 11.6 9.2 H10.2" stroke="#5db8ac"/><circle cx="10.9" cy="11.1" r="0.45" fill="#5db8ac" stroke="none"/></svg>
<div class="rowline" style="top:669.46px"></div>
<svg class="abs" style="left:247.7px;top:680.06px" width="14.5" height="14" viewBox="0 0 14.5 14" fill="none" stroke="#35a598" stroke-width="1" stroke-linejoin="round" stroke-linecap="round"><path d="M6.2 3.1 H2.1 Q0.5 3.1 0.5 4.7 V11.7 Q0.5 13.3 2.1 13.3 H10.1 Q11.7 13.3 11.7 11.7 V8"/><path d="M3.5 11.1 L4.1 8.4 L11.1 1.4 Q11.9 0.6 12.7 1.4 L13.2 1.9 Q14 2.7 13.2 3.5 L6.2 10.5 Z"/><path d="M10.1 2.5 L12.1 4.5"/></svg>
<div class="cell" style="left:285.9px;top:679.81px">2023-07</div>
<div class="cb" style="left:372px;top:679.96px"></div>
<div class="cell lnk" style="left:393px;width:120px;text-align:center;top:679.81px">2023000073</div>
<div class="cell" style="left:503.5px;width:120px;text-align:center;top:679.81px">19-07-2023</div>
<div class="cell" style="left:610.5px;width:120px;text-align:center;top:679.81px">03-08-2023</div>
<div class="cell" style="left:734.5px;top:679.81px">Axit International Trading</div>
<div class="badge" style="top:677.56px">Definitief</div>
<div class="cell" style="left:1055.5px;width:120px;text-align:right;top:679.81px">53,75</div>
<svg class="abs" style="left:1208.4px;top:678.26px" width="17" height="17" viewBox="0 0 17 17" fill="none" stroke="#2e2e2e" stroke-width="1.15"><circle cx="7.1" cy="7.05" r="6"/><path d="M11.35 11.3 L16.3 16.25"/></svg>
<svg class="abs" style="left:1274.6px;top:680.36px" width="14" height="14" viewBox="0 0 14 14" fill="none" stroke="#33a194" stroke-width="1.05" stroke-linecap="round"><path d="M6.8 1.2 V9.6 M3 6 L6.8 9.8 L10.4 6.2"/><path d="M3.1 9.2 H2.2 Q1 9.2 1 10.4 V11.6 Q1 12.9 2.3 12.9 H11.5 Q12.8 12.9 12.8 11.6 V10.4 Q12.8 9.2 11.6 9.2 H10.2" stroke="#5db8ac"/><circle cx="10.9" cy="11.1" r="0.45" fill="#5db8ac" stroke="none"/></svg>
<div class="rowline" style="top:704.82px"></div>
<svg class="abs" style="left:247.7px;top:715.42px" width="14.5" height="14" viewBox="0 0 14.5 14" fill="none" stroke="#35a598" stroke-width="1" stroke-linejoin="round" stroke-linecap="round"><path d="M6.2 3.1 H2.1 Q0.5 3.1 0.5 4.7 V11.7 Q0.5 13.3 2.1 13.3 H10.1 Q11.7 13.3 11.7 11.7 V8"/><path d="M3.5 11.1 L4.1 8.4 L11.1 1.4 Q11.9 0.6 12.7 1.4 L13.2 1.9 Q14 2.7 13.2 3.5 L6.2 10.5 Z"/><path d="M10.1 2.5 L12.1 4.5"/></svg>
<div class="cell" style="left:285.9px;top:715.17px">2023-07</div>
<div class="cb" style="left:372px;top:715.32px"></div>
<div class="cell lnk" style="left:393px;width:120px;text-align:center;top:715.17px">2023000072</div>
<div class="cell" style="left:503.5px;width:120px;text-align:center;top:715.17px">19-07-2023</div>
<div class="cell" style="left:610.5px;width:120px;text-align:center;top:715.17px">03-08-2023</div>
<div class="cell" style="left:734.5px;top:715.17px">All About Wine</div>
<div class="badge" style="top:712.92px">Definitief</div>
<div class="cell" style="left:1055.5px;width:120px;text-align:right;top:715.17px">53,75</div>
<svg class="abs" style="left:1208.4px;top:713.62px" width="17" height="17" viewBox="0 0 17 17" fill="none" stroke="#2e2e2e" stroke-width="1.15"><circle cx="7.1" cy="7.05" r="6"/><path d="M11.35 11.3 L16.3 16.25"/></svg>
<svg class="abs" style="left:1274.6px;top:715.72px" width="14" height="14" viewBox="0 0 14 14" fill="none" stroke="#33a194" stroke-width="1.05" stroke-linecap="round"><path d="M6.8 1.2 V9.6 M3 6 L6.8 9.8 L10.4 6.2"/><path d="M3.1 9.2 H2.2 Q1 9.2 1 10.4 V11.6 Q1 12.9 2.3 12.9 H11.5 Q12.8 12.9 12.8 11.6 V10.4 Q12.8 9.2 11.6 9.2 H10.2" stroke="#5db8ac"/><circle cx="10.9" cy="11.1" r="0.45" fill="#5db8ac" stroke="none"/></svg>
<div class="rowline" style="top:740.18px"></div>
<svg class="abs" style="left:247.7px;top:750.78px" width="14.5" height="14" viewBox="0 0 14.5 14" fill="none" stroke="#35a598" stroke-width="1" stroke-linejoin="round" stroke-linecap="round"><path d="M6.2 3.1 H2.1 Q0.5 3.1 0.5 4.7 V11.7 Q0.5 13.3 2.1 13.3 H10.1 Q11.7 13.3 11.7 11.7 V8"/><path d="M3.5 11.1 L4.1 8.4 L11.1 1.4 Q11.9 0.6 12.7 1.4 L13.2 1.9 Q14 2.7 13.2 3.5 L6.2 10.5 Z"/><path d="M10.1 2.5 L12.1 4.5"/></svg>
<div class="cell" style="left:285.9px;top:750.53px">2023-07</div>
<div class="cb" style="left:372px;top:750.68px"></div>
<div class="cell lnk" style="left:393px;width:120px;text-align:center;top:750.53px">2023000071</div>
<div class="cell" style="left:503.5px;width:120px;text-align:center;top:750.53px">26-07-2023</div>
<div class="cell" style="left:610.5px;width:120px;text-align:center;top:750.53px">10-08-2023</div>
<div class="cell" style="left:734.5px;top:750.53px">Axit International Trading</div>
<div class="badge" style="top:748.28px">Definitief</div>
<div class="cell" style="left:1055.5px;width:120px;text-align:right;top:750.53px">53,75</div>
<svg class="abs" style="left:1208.4px;top:748.98px" width="17" height="17" viewBox="0 0 17 17" fill="none" stroke="#2e2e2e" stroke-width="1.15"><circle cx="7.1" cy="7.05" r="6"/><path d="M11.35 11.3 L16.3 16.25"/></svg>
<svg class="abs" style="left:1274.6px;top:751.08px" width="14" height="14" viewBox="0 0 14 14" fill="none" stroke="#33a194" stroke-width="1.05" stroke-linecap="round"><path d="M6.8 1.2 V9.6 M3 6 L6.8 9.8 L10.4 6.2"/><path d="M3.1 9.2 H2.2 Q1 9.2 1 10.4 V11.6 Q1 12.9 2.3 12.9 H11.5 Q12.8 12.9 12.8 11.6 V10.4 Q12.8 9.2 11.6 9.2 H10.2" stroke="#5db8ac"/><circle cx="10.9" cy="11.1" r="0.45" fill="#5db8ac" stroke="none"/></svg>
<div class="rowline" style="top:775.54px"></div>
<svg class="abs" style="left:247.7px;top:786.14px" width="14.5" height="14" viewBox="0 0 14.5 14" fill="none" stroke="#35a598" stroke-width="1" stroke-linejoin="round" stroke-linecap="round"><path d="M6.2 3.1 H2.1 Q0.5 3.1 0.5 4.7 V11.7 Q0.5 13.3 2.1 13.3 H10.1 Q11.7 13.3 11.7 11.7 V8"/><path d="M3.5 11.1 L4.1 8.4 L11.1 1.4 Q11.9 0.6 12.7 1.4 L13.2 1.9 Q14 2.7 13.2 3.5 L6.2 10.5 Z"/><path d="M10.1 2.5 L12.1 4.5"/></svg>
<div class="cell" style="left:285.9px;top:785.89px">2023-07</div>
<div class="cb" style="left:372px;top:786.04px"></div>
<div class="cell lnk" style="left:393px;width:120px;text-align:center;top:785.89px">2023000058</div>
<div class="cell" style="left:503.5px;width:120px;text-align:center;top:785.89px">26-07-2023</div>
<div class="cell" style="left:610.5px;width:120px;text-align:center;top:785.89px">10-08-2023</div>
<div class="cell" style="left:734.5px;top:785.89px">All About Wine</div>
<div class="badge" style="top:783.64px">Definitief</div>
<div class="cell" style="left:1055.5px;width:120px;text-align:right;top:785.89px">5.953,25</div>
<svg class="abs" style="left:1208.4px;top:784.34px" width="17" height="17" viewBox="0 0 17 17" fill="none" stroke="#2e2e2e" stroke-width="1.15"><circle cx="7.1" cy="7.05" r="6"/><path d="M11.35 11.3 L16.3 16.25"/></svg>
<svg class="abs" style="left:1274.6px;top:786.44px" width="14" height="14" viewBox="0 0 14 14" fill="none" stroke="#33a194" stroke-width="1.05" stroke-linecap="round"><path d="M6.8 1.2 V9.6 M3 6 L6.8 9.8 L10.4 6.2"/><path d="M3.1 9.2 H2.2 Q1 9.2 1 10.4 V11.6 Q1 12.9 2.3 12.9 H11.5 Q12.8 12.9 12.8 11.6 V10.4 Q12.8 9.2 11.6 9.2 H10.2" stroke="#5db8ac"/><circle cx="10.9" cy="11.1" r="0.45" fill="#5db8ac" stroke="none"/></svg>
<div class="rowline" style="top:810.90px"></div>
</div></body></html>
